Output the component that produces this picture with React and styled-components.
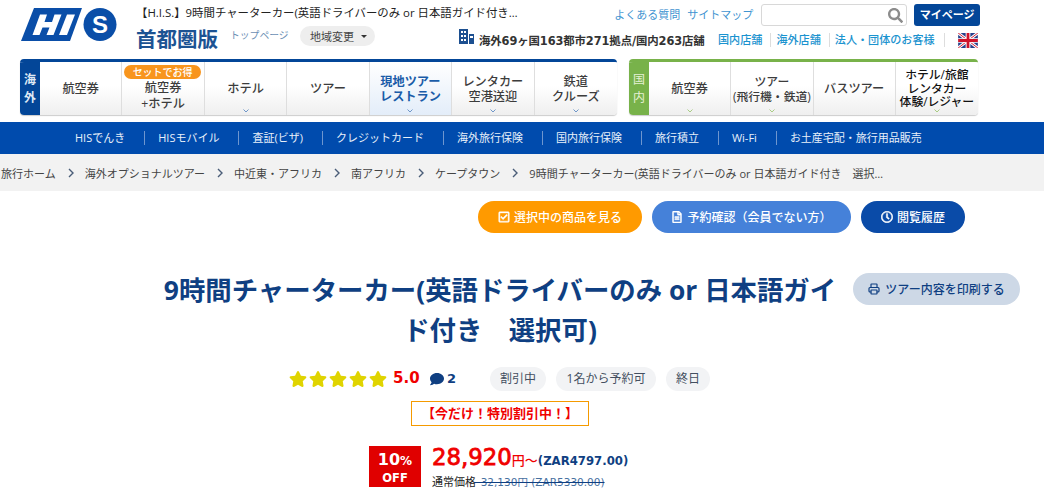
import React from 'react'
import styled, { createGlobalStyle } from 'styled-components'
import { FaSearch, FaRegCheckSquare, FaRegFileAlt, FaRegClock, FaComment, FaStar } from 'react-icons/fa'
import { Printer } from 'lucide-react'

const JP = `"Open Sans", "Noto Sans CJK JP", sans-serif`
const NAVY = '#0a4ba8'

const GlobalStyle = createGlobalStyle`
  html, body {
    margin: 0;
    padding: 0;
    height: 100%;
    overflow: hidden;
    background: #fff;
  }
  body {
    font-family: ${JP};
    color: #333;
  }
`

const Container = styled.div`
  width: 960px;
  margin-left: 20px;
`

const Header = styled(Container)`
  display: flex;
  height: 59px;
`

const LogoWrap = styled.a`
  display: block;
  width: 116px;
  padding: 8px 0 0 1px;
  box-sizing: border-box;
`

const HeaderMain = styled.div`
  flex: 1;
  min-width: 0;
`

const TopRow = styled.div`
  display: flex;
  height: 26px;
  padding-top: 4px;
  box-sizing: border-box;
`

const SiteTitle = styled.h1`
  margin: 2px 0 0;
  width: 479px;
  font-size: 11.4px;
  line-height: 14px;
  font-weight: 400;
  color: #222;
  white-space: nowrap;
`

const UtilLink = styled.a`
  margin: 3px 7px 0 0;
  font-size: 11px;
  line-height: 16px;
  color: #3f94d1;
  white-space: nowrap;
`

const SearchBox = styled.div`
  width: 146px;
  height: 22px;
  margin-left: 1px;
  box-sizing: border-box;
  border: 1px solid #d8d8d8;
  border-radius: 3px;
  display: flex;
  align-items: center;
  justify-content: flex-end;
  padding-right: 3px;
  color: #8c8c8c;
  font-size: 15px;
`

const MyPage = styled.a`
  width: 66px;
  height: 22px;
  margin-left: 7px;
  border-radius: 3px;
  background: #034698;
  color: #fff;
  font-size: 11px;
  font-weight: 700;
  line-height: 21px;
  text-align: center;
`

const SecondRow = styled.div`
  display: flex;
  align-items: flex-start;
`

const RegionName = styled.div`
  font-size: 20.5px;
  line-height: 26px;
  font-weight: 700;
  color: #1c5393;
  width: 94px;
  white-space: nowrap;
`

const TopLink = styled.a`
  width: 70px;
  margin-top: 3px;
  font-size: 9.8px;
  line-height: 14px;
  color: #6c8fb4;
`

const RegionButton = styled.button`
  width: 75px;
  height: 20px;
  margin: 0;
  padding: 0 0 0 2px;
  border: 0;
  border-radius: 10px;
  background: #eeeeee;
  color: #444;
  font-family: ${JP};
  font-size: 11px;
  display: flex;
  align-items: center;
  justify-content: center;
  gap: 7px;
`

const Caret = styled.span`
  border-left: 3px solid transparent;
  border-right: 3px solid transparent;
  border-top: 3px solid #333;
`

const StatsLine = styled.div`
  display: flex;
  align-items: center;
  margin: 4px 0 0 84px;
  height: 20px;
  white-space: nowrap;
`

const BuildingWrap = styled.span`
  display: block;
  align-self: flex-start;
  margin-top: -1px;
  line-height: 0;
`

const Stats = styled.span`
  width: 239px;
  margin-left: 5px;
  font-family: "DejaVu Sans", "Noto Sans CJK JP", sans-serif;
  font-size: 11.4px;
  font-weight: 700;
  letter-spacing: -0.1px;
  color: #333;
`

const ShopLink = styled.a`
  font-size: 11.1px;
  line-height: 14px;
  font-weight: 500;
  color: #1b93cf;
  padding-right: ${p => p.$gap}px;
  border-right: 1px solid #ddd;
  margin-right: 5px;
`

const FlagWrap = styled.span`
  display: block;
  margin-left: 8px;
  line-height: 0;
`

const NavRow = styled(Container)`
  display: flex;
  gap: 12px;
`

const NavPanel = styled.nav`
  display: flex;
  width: ${p => p.$width}px;
  height: 56px;
  box-sizing: border-box;
  border-top: 3px solid ${p => p.$color};
  border-radius: 4px;
  overflow: hidden;
  box-shadow: 0 1px 1px #ccc;
`

const NavLabel = styled.div`
  width: 20px;
  flex: none;
  background: ${p => p.$color};
  color: ${p => p.$light ? '#e4f0d4' : '#dfe9f5'};
  font-size: 12px;
  font-weight: ${p => p.$light ? 400 : 700};
  line-height: 18px;
  display: flex;
  flex-direction: column;
  align-items: center;
  justify-content: center;
`

const NavCells = styled.div`
  flex: 1;
  display: grid;
  grid-template-columns: repeat(${p => p.$count}, 1fr);
`

const NavCell = styled.a`
  position: relative;
  display: flex;
  align-items: center;
  justify-content: center;
  text-align: center;
  padding-top: ${p => p.$pad || 0}px;
  box-sizing: border-box;
  border-right: 1px solid #dedede;
  background: ${p => p.$active
    ? 'linear-gradient(#fff, #e3edf9)'
    : 'linear-gradient(#fff 45%, #efefef)'};
  color: ${p => p.$active ? '#1a5ca8' : p.$color || '#3c3c3c'};
  font-size: ${p => p.$size || 12.2}px;
  font-weight: ${p => p.$active ? 700 : 500};
  line-height: ${p => p.$lh || 15}px;
  white-space: pre-line;
  &:last-child {
    border-right: 0;
  }
`

const Chevron = styled.svg`
  position: absolute;
  left: 50%;
  bottom: 2px;
  margin-left: -3px;
`

const DealBadge = styled.span`
  position: absolute;
  left: 2px;
  right: 3px;
  top: 3px;
  height: 14px;
  border-radius: 7px;
  background: #f8951d;
  color: #fff;
  font-size: 10px;
  font-weight: 500;
  line-height: 14px;
`

const SubBand = styled.div`
  margin-top: 7px;
  height: 32px;
  background: #004bad;
  display: flex;
  align-items: center;
  padding-left: 59px;
`

const SubLink = styled.a`
  height: 14px;
  padding: 0 19px 0 13px;
  margin-left: ${p => (p.$first ? 3 : 0)}px;
  border-left: ${p => (p.$first ? 0 : '1px solid #6e96cf')};
  color: #e8f0fa;
  font-size: 11px;
  line-height: 14px;
  white-space: nowrap;
`

const Breadcrumbs = styled.div`
  height: 37px;
  background: #f2f2f2;
  display: flex;
  align-items: center;
  padding-left: 1px;
  font-size: 11px;
  color: #444;
  white-space: nowrap;
`

const CrumbSep = styled.svg`
  margin: 0 11px 0 12px;
  flex: none;
`

const ActionRow = styled.div`
  display: flex;
  gap: 10px;
  margin: 10px 0 0 478px;
`

const ActionButton = styled.a`
  height: 32px;
  width: ${p => p.$width}px;
  border-radius: 16px;
  background: ${p => p.$color};
  color: #fff;
  font-size: 12px;
  font-weight: 500;
  display: flex;
  align-items: center;
  justify-content: center;
  gap: 4px;
  white-space: nowrap;
  & svg {
    font-size: 12px;
    stroke: currentColor;
    stroke-width: 20;
  }
`

const TitleRow = styled.div`
  display: flex;
  margin-top: 40px;
`

const Title = styled.h2`
  width: 690px;
  margin: -3px 0 0 155px;
  font-size: 26.4px;
  line-height: 40px;
  font-weight: 700;
  color: #0f3f82;
  text-align: center;
`

const PrintButton = styled.a`
  width: 167px;
  height: 32px;
  margin-left: 8px;
  border-radius: 16px;
  background: #cdd8e6;
  color: #0f3f82;
  font-size: 12px;
  font-weight: 500;
  display: flex;
  align-items: center;
  justify-content: center;
  gap: 5px;
`

const MetaRow = styled.div`
  display: flex;
  align-items: center;
  margin: 17px 0 0 289px;
  height: 24px;
`

const Stars = styled.div`
  display: flex;
  gap: 2px;
  width: 104px;
  color: #e0d400;
  font-size: 18px;
`

const Score = styled.span`
  width: 37px;
  margin-top: -2px;
  font-family: "DejaVu Sans", sans-serif;
  font-size: 15px;
  font-weight: 700;
  color: #f00000;
`

const Reviews = styled.span`
  display: flex;
  align-items: center;
  gap: 3px;
  width: 60px;
  margin-top: -1px;
  font-family: "DejaVu Sans", sans-serif;
  font-size: 13px;
  font-weight: 700;
  color: #0f3f82;
  & svg {
    font-size: 14px;
  }
`

const Chip = styled.span`
  width: ${p => p.$width}px;
  height: 24px;
  margin-right: 10px;
  border-radius: 12px;
  background: #f2f3f5;
  color: #444f60;
  font-size: 12px;
  line-height: 24px;
  text-align: center;
`

const Campaign = styled.div`
  width: 178px;
  height: 25px;
  box-sizing: border-box;
  margin: 10px 0 0 411px;
  border: 1px solid #f59a00;
  color: #f00000;
  font-size: 13px;
  font-weight: 700;
  line-height: 22px;
  text-align: center;
  white-space: nowrap;
`

const PriceRow = styled.div`
  display: flex;
  margin: 20px 0 0 369px;
`

const OffBadge = styled.div`
  width: 52px;
  height: 41px;
  background: #e00000;
  color: #fff;
  font-family: "DejaVu Sans", sans-serif;
  font-weight: 700;
  text-align: center;
  font-size: 11.5px;
  line-height: 15px;
  padding-top: 4px;
  box-sizing: border-box;
`

const Percent = styled.div`
  font-size: 16px;
  line-height: 19px;
  & small {
    font-size: 12px;
  }
`

const PriceCol = styled.div`
  margin: -3px 0 0 11px;
`

const PriceLine = styled.div`
  display: flex;
  align-items: baseline;
  height: 28px;
  white-space: nowrap;
`

const Price = styled.span`
  font-family: "DejaVu Sans", sans-serif;
  font-size: 22.8px;
  line-height: 28px;
  font-weight: 400;
  color: #f00000;
  -webkit-text-stroke: 0.8px #f00000;
`

const Yen = styled.span`
  font-size: 13px;
  font-weight: 500;
  color: #f00000;
`

const Zar = styled.span`
  font-family: "DejaVu Sans", sans-serif;
  font-size: 11.7px;
  font-weight: 700;
  color: #0f3f82;
`

const RegularPrice = styled.div`
  margin-top: 4px;
  font-size: 11px;
  line-height: 14px;
  color: #222;
  white-space: pre;
`

const Struck = styled.span`
  margin-left: -2px;
  font-family: "DejaVu Sans", "Noto Sans CJK JP", sans-serif;
  font-size: 10.5px;
  color: #47709f;
  text-decoration: line-through;
  text-decoration-color: #0f3f82;
`

const HisLogo = () => (
  <svg width="97" height="33" viewBox="0 0 97 33">
    <path d="M13 0H61L49 33H0Z" fill="#0a4ea8" />
    <path d="M19 6.5H26L23.5 14H31L33.5 6.5H40.5L32.5 27H25.5L28.5 19.5H21.5L18.5 27H11.5Z" fill="#fff" />
    <path d="M46 6.5H54L46 27H38Z" fill="#fff" />
    <circle cx="79" cy="16.5" r="16.5" fill="#0a4ea8" />
    <text x="79" y="25" textAnchor="middle" fontFamily="Liberation Sans, sans-serif" fontSize="24" fontWeight="700" fill="#fff">S</text>
  </svg>
)

const BuildingIcon = () => (
  <svg width="15" height="15" viewBox="0 0 15 15">
    <path d="M0 0H9V15H0Z" fill="#1c4f90" />
    <path d="M10 5H15V15H10Z" fill="#1c4f90" />
    <path d="M2 2H4V4H2ZM5 2H7V4H5ZM2 6H4V8H2ZM5 6H7V8H5ZM2 10H4V12H2ZM5 10H7V12H5ZM11 7H14V9H11Z" fill="#fff" />
  </svg>
)

const UkFlag = () => (
  <svg width="20" height="15" viewBox="0 0 21 16">
    <rect width="21" height="16" fill="#27408b" />
    <path d="M0 0L21 16M21 0L0 16" stroke="#fff" strokeWidth="3" />
    <path d="M0 0L21 16M21 0L0 16" stroke="#cf142b" strokeWidth="1" />
    <path d="M10.5 0V16M0 8H21" stroke="#fff" strokeWidth="5" />
    <path d="M10.5 0V16M0 8H21" stroke="#cf142b" strokeWidth="3" />
  </svg>
)

const NavChevron = ({ color }) => (
  <Chevron width="6" height="4" viewBox="0 0 6 4">
    <path d="M.5.5L3 3L5.5.5" fill="none" stroke={color} strokeWidth="1" />
  </Chevron>
)

const overseas = [
  { label: '航空券' },
  { label: '航空券\n+ホテル', badge: 'セットでお得', pad: 14, lh: 16 },
  { label: 'ホテル', chevron: true },
  { label: 'ツアー' },
  { label: '現地ツアー\nレストラン', chevron: true, active: true },
  { label: 'レンタカー\n空港送迎', chevron: true },
  { label: '鉄道\nクルーズ', chevron: true },
]

const domestic = [
  { label: '航空券', chevron: true },
  { label: 'ツアー\n(飛行機・鉄道)', chevron: true, size: 11.8 },
  { label: 'バスツアー' },
  { label: 'ホテル/旅館\nレンタカー\n体験/レジャー', chevron: true, size: 11.8, lh: 13.5, color: '#111' },
]

const subLinks = ['HISでんき', 'HISモバイル', '査証(ビザ)', 'クレジットカード', '海外旅行保険', '国内旅行保険', '旅行積立', 'Wi-Fi', 'お土産宅配・旅行用品販売']

const crumbs = ['旅行ホーム', '海外オプショナルツアー', '中近東・アフリカ', '南アフリカ', 'ケープタウン', '9時間チャーターカー(英語ドライバーのみ or 日本語ガイド付き　選択…']

const Cells = ({ items, chevronColor }) => (
  <NavCells $count={items.length}>
    {items.map(item => (
      <NavCell key={item.label} $active={item.active} $pad={item.pad} $size={item.size} $lh={item.lh} $color={item.color}>
        {item.badge && <DealBadge>{item.badge}</DealBadge>}
        {item.label}
        {item.chevron && <NavChevron color={chevronColor} />}
      </NavCell>
    ))}
  </NavCells>
)

export default function App() {
  return (
    <>
      <GlobalStyle />
      <Header>
        <LogoWrap><HisLogo /></LogoWrap>
        <HeaderMain>
          <TopRow>
            <SiteTitle>【H.I.S.】9時間チャーターカー(英語ドライバーのみ or 日本語ガイド付き…</SiteTitle>
            <UtilLink>よくある質問</UtilLink>
            <UtilLink>サイトマップ</UtilLink>
            <SearchBox><FaSearch /></SearchBox>
            <MyPage>マイページ</MyPage>
          </TopRow>
          <SecondRow>
            <RegionName>首都圏版</RegionName>
            <TopLink>トップページ</TopLink>
            <RegionButton>地域変更<Caret /></RegionButton>
            <StatsLine>
              <BuildingWrap><BuildingIcon /></BuildingWrap>
              <Stats>海外69ヶ国163都市271拠点/国内263店舗</Stats>
              <ShopLink $gap={8}>国内店舗</ShopLink>
              <ShopLink $gap={8}>海外店舗</ShopLink>
              <ShopLink $gap={9}>法人・団体のお客様</ShopLink>
              <FlagWrap><UkFlag /></FlagWrap>
            </StatsLine>
          </SecondRow>
        </HeaderMain>
      </Header>

      <NavRow>
        <NavPanel $width={597} $color="#034698">
          <NavLabel $color="#034698"><span>海</span><span>外</span></NavLabel>
          <Cells items={overseas} chevronColor="#6f97c9" />
        </NavPanel>
        <NavPanel $width={349} $color="#78b24a">
          <NavLabel $color="#78b24a" $light><span>国</span><span>内</span></NavLabel>
          <Cells items={domestic} chevronColor="#a9cc84" />
        </NavPanel>
      </NavRow>

      <SubBand>
        {subLinks.map((link, i) => (
          <SubLink key={link} $first={i === 0}>{link}</SubLink>
        ))}
      </SubBand>

      <Breadcrumbs>
        {crumbs.map((crumb, i) => (
          <React.Fragment key={crumb}>
            {i > 0 && (
              <CrumbSep width="6" height="10" viewBox="0 0 6 10">
                <path d="M1 1L5 5L1 9" fill="none" stroke="#4a5d78" strokeWidth="1.4" />
              </CrumbSep>
            )}
            <span>{crumb}</span>
          </React.Fragment>
        ))}
      </Breadcrumbs>

      <ActionRow>
        <ActionButton $width={164} $color="#ff9a00"><FaRegCheckSquare />選択中の商品を見る</ActionButton>
        <ActionButton $width={199} $color="#4581d9"><FaRegFileAlt />予約確認（会員でない方）</ActionButton>
        <ActionButton $width={104} $color={NAVY}><FaRegClock />閲覧履歴</ActionButton>
      </ActionRow>

      <TitleRow>
        <Title>9時間チャーターカー(英語ドライバーのみ or 日本語ガイド付き　選択可)</Title>
        <PrintButton><Printer size={12} strokeWidth={2.4} />ツアー内容を印刷する</PrintButton>
      </TitleRow>

      <MetaRow>
        <Stars>{[0, 1, 2, 3, 4].map(i => <FaStar key={i} />)}</Stars>
        <Score>5.0</Score>
        <Reviews><FaComment />2</Reviews>
        <Chip $width={56}>割引中</Chip>
        <Chip $width={100}>1名から予約可</Chip>
        <Chip $width={44}>終日</Chip>
      </MetaRow>

      <Campaign>【今だけ！特別割引中！】</Campaign>

      <PriceRow>
        <OffBadge>
          <Percent>10<small>%</small></Percent>
          OFF
        </OffBadge>
        <PriceCol>
          <PriceLine>
            <Price>28,920</Price>
            <Yen>円～</Yen>
            <Zar>(ZAR4797.00)</Zar>
          </PriceLine>
          <RegularPrice>通常価格<Struck>  32,130円 (ZAR5330.00)</Struck></RegularPrice>
        </PriceCol>
      </PriceRow>
    </>
  )
}
